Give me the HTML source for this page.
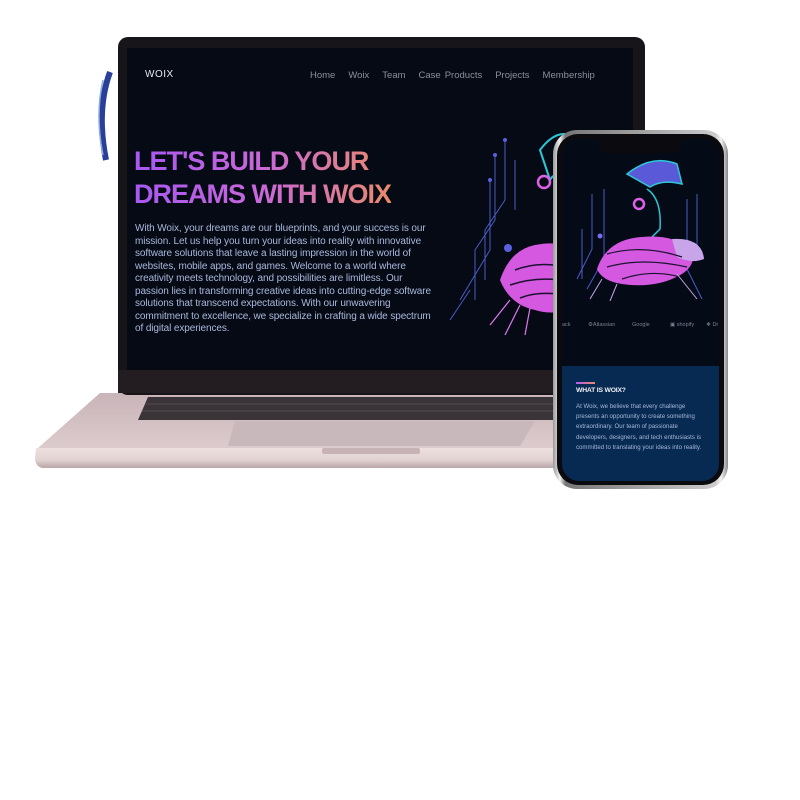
<!DOCTYPE html>
<html><head><meta charset="utf-8"><style>
*{margin:0;padding:0;box-sizing:border-box}
body{width:800px;height:800px;background:#fff;position:relative;overflow:hidden;font-family:"Liberation Sans",sans-serif}
.a{position:absolute}
</style></head><body>
<svg class="a" style="left:0;top:0" width="800" height="800">
<defs>
<linearGradient id="deck" x1="0" y1="0" x2="0" y2="1"><stop offset="0" stop-color="#c9b4b8"/><stop offset="1" stop-color="#dccbcd"/></linearGradient>
<linearGradient id="lip" x1="0" y1="0" x2="0" y2="1"><stop offset="0" stop-color="#ede0df"/><stop offset="0.6" stop-color="#e2d2d2"/><stop offset="1" stop-color="#b9a5a8"/></linearGradient>
</defs>
<path d="M100 393 L640 393 L640 448 L38 448 Z" fill="url(#deck)"/>
<path d="M36 448 L640 448 L640 468 L42 468 Q35 466 35 458 Z" fill="url(#lip)"/>
<rect x="322" y="448" width="98" height="6" rx="2" fill="#c7b3b5"/>
<path d="M148 397 L560 397 L560 420 L138 420 Z" fill="#3a3439"/>
<g stroke="#6c646b" stroke-width="0.6">
<line x1="146" y1="404" x2="560" y2="404"/><line x1="142" y1="411" x2="560" y2="411"/>
</g>
<path d="M235 421 L535 421 L520 446 L228 446 Z" fill="#c8b8bb"/>
<rect x="118" y="37" width="527" height="358" rx="10" fill="#17151a"/>
<path d="M118 370 L645 370 L645 393 L118 393 Z" fill="#231c21"/>
<path d="M110 72 Q96 110 106 160" stroke="#2a3f9a" stroke-width="6" fill="none"/>
<path d="M103 80 Q95 115 103 155" stroke="#8ad" stroke-width="1.5" fill="none"/>
</svg>
<div class="a" style="left:127px;top:48px;width:506px;height:322px;background:#050a14"></div>
<div class="a" style="left:145px;top:69px;color:#e8e8ee;font-size:10px;letter-spacing:0.5px">WOIX</div>
<div class="a" style="left:310px;top:70px;color:#8a8f9c;font-size:9.5px;white-space:nowrap">
<span style="margin-right:13px">Home</span><span style="margin-right:13px">Woix</span><span style="margin-right:13px">Team</span><span style="margin-right:4px">Case</span><span style="margin-right:13px">Products</span><span style="margin-right:13px">Projects</span><span>Membership</span></div>
<div class="a" style="left:134px;top:145px;font-size:27px;font-weight:bold;line-height:33px;letter-spacing:-1px;background:linear-gradient(90deg,#a858f2,#c868d8 50%,#e98a6a);-webkit-background-clip:text;color:transparent;white-space:nowrap">LET'S BUILD YOUR<br>DREAMS WITH WOIX</div>
<div class="a" style="left:135px;top:223px;width:298px;font-size:10px;line-height:12.5px;color:#aab8dc;letter-spacing:-0.1px">With Woix, your dreams are our blueprints, and your success is our mission. Let us help you turn your ideas into reality with innovative software solutions that leave a lasting impression in the world of websites, mobile apps, and games. Welcome to a world where creativity meets technology, and possibilities are limitless. Our passion lies in transforming creative ideas into cutting-edge software solutions that transcend expectations. With our unwavering commitment to excellence, we specialize in crafting a wide spectrum of digital experiences.</div>
<svg class="a" style="left:440px;top:110px" width="130" height="230">
<g stroke="#4a5cc8" stroke-width="1" fill="none">
<path d="M65 30 V90 L45 120 V170"/><path d="M55 45 V110 L35 140 V190"/><path d="M50 70 V140 L20 190"/><path d="M75 50 V100"/><path d="M30 180 L10 210"/>
</g>
<g fill="#5a5fe0"><circle cx="65" cy="30" r="2"/><circle cx="55" cy="45" r="2"/><circle cx="50" cy="70" r="2"/><circle cx="68" cy="138" r="4"/></g>
<path d="M100 40 Q115 20 130 25 L130 70 Q115 60 110 70 Z" fill="none" stroke="#2cc8d8" stroke-width="2"/>
<circle cx="104" cy="72" r="6" fill="none" stroke="#e060e8" stroke-width="2.5"/>
<path d="M60 170 Q70 140 95 135 Q120 130 130 140 L130 200 Q110 205 95 200 Q70 195 60 170 Z" fill="#d458e0"/>
<path d="M75 160 Q100 150 130 158 M70 175 Q100 165 130 172 M80 188 Q100 180 130 186" stroke="#1a1230" stroke-width="1.5" fill="none"/>
<path d="M70 190 L50 215 M80 195 L65 225 M90 198 L85 225" stroke="#e078f0" stroke-width="1.2"/>
</svg>
<div class="a" style="left:553px;top:130px;width:175px;height:359px;border-radius:24px;background:linear-gradient(90deg,#999,#f2f2f2 4%,#777 7%,#ccc 93%,#f2f2f2 96%,#888);"></div>
<div class="a" style="left:557px;top:134px;width:167px;height:351px;border-radius:21px;background:#0b0b0f"></div>
<div class="a" style="left:562px;top:139px;width:157px;height:342px;border-radius:17px;background:#040a16;overflow:hidden">
<div class="a" style="left:37px;top:0;width:83px;height:14px;background:#0b0b0f;border-radius:0 0 10px 10px"></div>
<svg class="a" style="left:0;top:0" width="157" height="180">
<g stroke="#4a5cc8" stroke-width="1" fill="none">
<path d="M30 55 V110 L15 140"/><path d="M42 50 V120 L25 150"/><path d="M135 55 V110"/><path d="M125 60 V130 L140 160"/><path d="M20 90 V140"/>
</g>
<circle cx="38" cy="97" r="2.5" fill="#7a6cf0"/>
<path d="M65 35 Q90 15 115 25 L120 45 Q100 40 88 48 Z" fill="#5a5ad8" stroke="#2cc8d8" stroke-width="1.5"/>
<circle cx="77" cy="65" r="5" fill="none" stroke="#e060e8" stroke-width="2.5"/>
<path d="M85 50 Q100 60 98 90 L88 100" stroke="#2cc8d8" stroke-width="1.5" fill="none"/>
<path d="M35 130 Q45 100 80 98 Q110 95 130 110 Q135 125 120 135 Q95 150 60 145 Q40 142 35 130 Z" fill="#d458e0"/>
<path d="M110 100 Q140 98 142 120 Q130 125 115 118 Z" fill="#c8a4e8"/>
<path d="M45 115 Q80 105 120 118 M45 128 Q80 118 125 128 M60 140 Q90 130 118 138" stroke="#1a1230" stroke-width="1.2" fill="none"/>
<path d="M40 140 L28 160 M55 145 L48 162 M115 135 L135 160" stroke="#c8a4e8" stroke-width="1"/>
</svg>
<div class="a" style="left:0;top:183px;width:157px;font-size:5.5px;color:#7c8190;white-space:nowrap">
<span class="a" style="left:0">ack</span><span class="a" style="left:26px">⚙Atlassian</span><span class="a" style="left:70px">Google</span><span class="a" style="left:108px">▣ shopify</span><span class="a" style="left:144px">❖ Dr</span></div>
<div class="a" style="left:0;top:227px;width:157px;height:120px;background:#062a52"></div>
<div class="a" style="left:14px;top:243px;width:19px;height:2px;background:linear-gradient(90deg,#b45cf0,#e98a6a)"></div>
<div class="a" style="left:14px;top:248px;font-size:6.8px;font-weight:bold;color:#f0f0f5;letter-spacing:-0.2px">WHAT IS WOIX?</div>
<div class="a" style="left:14px;top:263px;width:128px;font-size:6.1px;line-height:10.2px;color:#aab8d8">At Woix, we believe that every challenge presents an opportunity to create something extraordinary. Our team of passionate developers, designers, and tech enthusiasts is committed to translating your ideas into reality.</div>
</div>
</body></html>
